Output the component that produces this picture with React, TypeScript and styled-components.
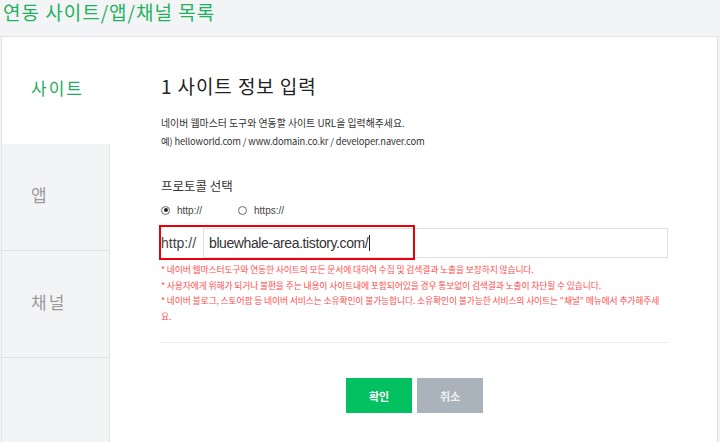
import styled, { createGlobalStyle } from "styled-components";

const GlobalStyle = createGlobalStyle`
  html, body {
    margin: 0;
    padding: 0;
    background: #f3f4f6;
    overflow: hidden;
  }
  body {
    font-family: "Noto Sans CJK KR", "Noto Sans", sans-serif;
    color: #333;
  }
`;

const Page = styled.div`
  width: 720px;
  height: 442px;
  display: flex;
  flex-direction: column;
  background: #f3f4f6;
`;

const TopBar = styled.div`
  height: 37px;
  box-sizing: border-box;
  padding: 1px 0 0 3px;
  border-bottom: 1px solid #e3e4e6;
`;

const PageTitle = styled.h1`
  margin: 0;
  font-size: 19px;
  font-weight: 400;
  line-height: 22px;
  color: #1fb15e;
  letter-spacing: 1px;
`;

const Card = styled.div`
  flex: 1;
  margin-left: 1px;
  width: 717px;
  display: flex;
  background: #fff;
  border-left: 1px solid #e3e3e3;
  border-right: 1px solid #e3e3e3;
  box-sizing: border-box;
`;

const Side = styled.nav`
  width: 108px;
  display: flex;
  flex-direction: column;
  flex-shrink: 0;
`;

const Tab = styled.div<{ active?: boolean }>`
  height: 107px;
  box-sizing: border-box;
  display: flex;
  align-items: center;
  padding: 0 0 6px 29px;
  font-size: 17px;
  letter-spacing: 2px;
  color: ${({ active }) => (active ? "#1fae5d" : "#9a9a9a")};
  background: ${({ active }) => (active ? "#fff" : "#f3f4f6")};
  border-right: ${({ active }) => (active ? "none" : "1px solid #e3e3e3")};
  border-bottom: ${({ active }) => (active ? "none" : "1px solid #e3e3e3")};
  border-top: ${({ active }) => (active ? "none" : "1px solid #e3e3e3")};
  & + & {
    border-top: none;
  }
`;

const SideFill = styled.div`
  flex: 1;
  background: #f3f4f6;
  border-right: 1px solid #e3e3e3;
`;

const Main = styled.main`
  flex: 1;
  padding: 37px 49px 0 51px;
  display: flex;
  flex-direction: column;
`;

const StepTitle = styled.h2`
  margin: 0;
  font-size: 19px;
  font-weight: 400;
  line-height: 24px;
  color: #222;
  letter-spacing: 0.9px;
`;

const Desc = styled.p`
  margin: 16px 0 0;
  font-size: 9.9px;
  line-height: 18px;
  color: #333;
`;

const Example = styled.span`
  font-size: 9.4px;
  letter-spacing: -0.15px;
`;

const SectionLabel = styled.div`
  margin-top: 27px;
  font-size: 12.5px;
  line-height: 18px;
  color: #333;
`;

const RadioRow = styled.div`
  margin-top: 7px;
  display: flex;
  align-items: center;
  gap: 36px;
  height: 16px;
`;

const RadioItem = styled.label`
  display: flex;
  align-items: center;
  gap: 7px;
  font-family: "Liberation Sans", Arial, sans-serif;
  font-size: 10px;
  color: #444;
`;

const RadioDot = styled.span<{ checked?: boolean }>`
  width: 9px;
  height: 9px;
  box-sizing: border-box;
  border: 1px solid #666;
  border-radius: 50%;
  display: flex;
  align-items: center;
  justify-content: center;
  &::after {
    content: "";
    width: 4px;
    height: 4px;
    border-radius: 50%;
    background: ${({ checked }) => (checked ? "#222" : "transparent")};
  }
`;

const UrlRow = styled.div`
  position: relative;
  margin-top: 10px;
  height: 30px;
  display: flex;
  align-items: center;
`;

const Prefix = styled.span`
  width: 42px;
  font-family: "Liberation Sans", Arial, sans-serif;
  font-size: 14px;
  color: #444;
`;

const UrlBox = styled.div`
  flex: 1;
  height: 30px;
  box-sizing: border-box;
  border: 1px solid #dde1e6;
  display: flex;
  align-items: center;
  padding-left: 5px;
  font-family: "Liberation Sans", Arial, sans-serif;
  font-size: 14px;
  letter-spacing: -0.4px;
  color: #333;
`;

const Caret = styled.span`
  display: inline-block;
  width: 1px;
  height: 16px;
  margin-left: 1px;
  background: #222;
`;

const Highlight = styled.div`
  position: absolute;
  left: -2px;
  top: -3px;
  width: 256px;
  height: 35px;
  box-sizing: border-box;
  border: 2px solid #e8000b;
  pointer-events: none;
`;

const Notes = styled.ul`
  margin: 4px 0 0;
  padding: 0;
  list-style: none;
  font-size: 8.8px;
  letter-spacing: -0.13px;
  line-height: 15.5px;
  color: #ff4f4f;
`;

const Divider = styled.hr`
  margin: 18px 0 0;
  border: none;
  border-top: 1px solid #ececec;
  height: 0;
`;

const Buttons = styled.div`
  margin-top: 35px;
  display: flex;
  justify-content: center;
  gap: 5px;
`;

const Button = styled.button<{ primary?: boolean }>`
  width: 66px;
  height: 35px;
  border: none;
  padding: 0;
  font-family: "Noto Sans CJK KR", sans-serif;
  font-size: 11px;
  font-weight: 700;
  color: ${({ primary }) => (primary ? "#fff" : "#eef0f2")};
  background: ${({ primary }) => (primary ? "#03c160" : "#aab3bc")};
`;

export default function App() {
  return (
    <>
      <GlobalStyle />
      <Page>
        <TopBar>
          <PageTitle>연동 사이트/앱/채널 목록</PageTitle>
        </TopBar>
        <Card>
          <Side>
            <Tab active>사이트</Tab>
            <Tab>앱</Tab>
            <Tab>채널</Tab>
            <SideFill />
          </Side>
          <Main>
            <StepTitle>1 사이트 정보 입력</StepTitle>
            <Desc>
              네이버 웹마스터 도구와 연동할 사이트 URL을 입력해주세요.
              <br />
              <Example>예) helloworld.com / www.domain.co.kr / developer.naver.com</Example>
            </Desc>
            <SectionLabel>프로토콜 선택</SectionLabel>
            <RadioRow>
              <RadioItem>
                <RadioDot checked />
                http://
              </RadioItem>
              <RadioItem>
                <RadioDot />
                https://
              </RadioItem>
            </RadioRow>
            <UrlRow>
              <Prefix>http://</Prefix>
              <UrlBox>
                bluewhale-area.tistory.com/
                <Caret />
              </UrlBox>
              <Highlight />
            </UrlRow>
            <Notes>
              <li>* 네이버 웹마스터도구와 연동한 사이트의 모든 문서에 대하여 수집 및 검색결과 노출을 보장하지 않습니다.</li>
              <li>* 사용자에게 위해가 되거나 불편을 주는 내용이 사이트내에 포함되어있을 경우 통보없이 검색결과 노출이 차단될 수 있습니다.</li>
              <li>
                * 네이버 블로그, 스토어팜 등 네이버 서비스는 소유확인이 불가능합니다. 소유확인이 불가능한 서비스의 사이트는 "채널" 메뉴에서 추가해주세요.
              </li>
            </Notes>
            <Divider />
            <Buttons>
              <Button primary>확인</Button>
              <Button>취소</Button>
            </Buttons>
          </Main>
        </Card>
      </Page>
    </>
  );
}
